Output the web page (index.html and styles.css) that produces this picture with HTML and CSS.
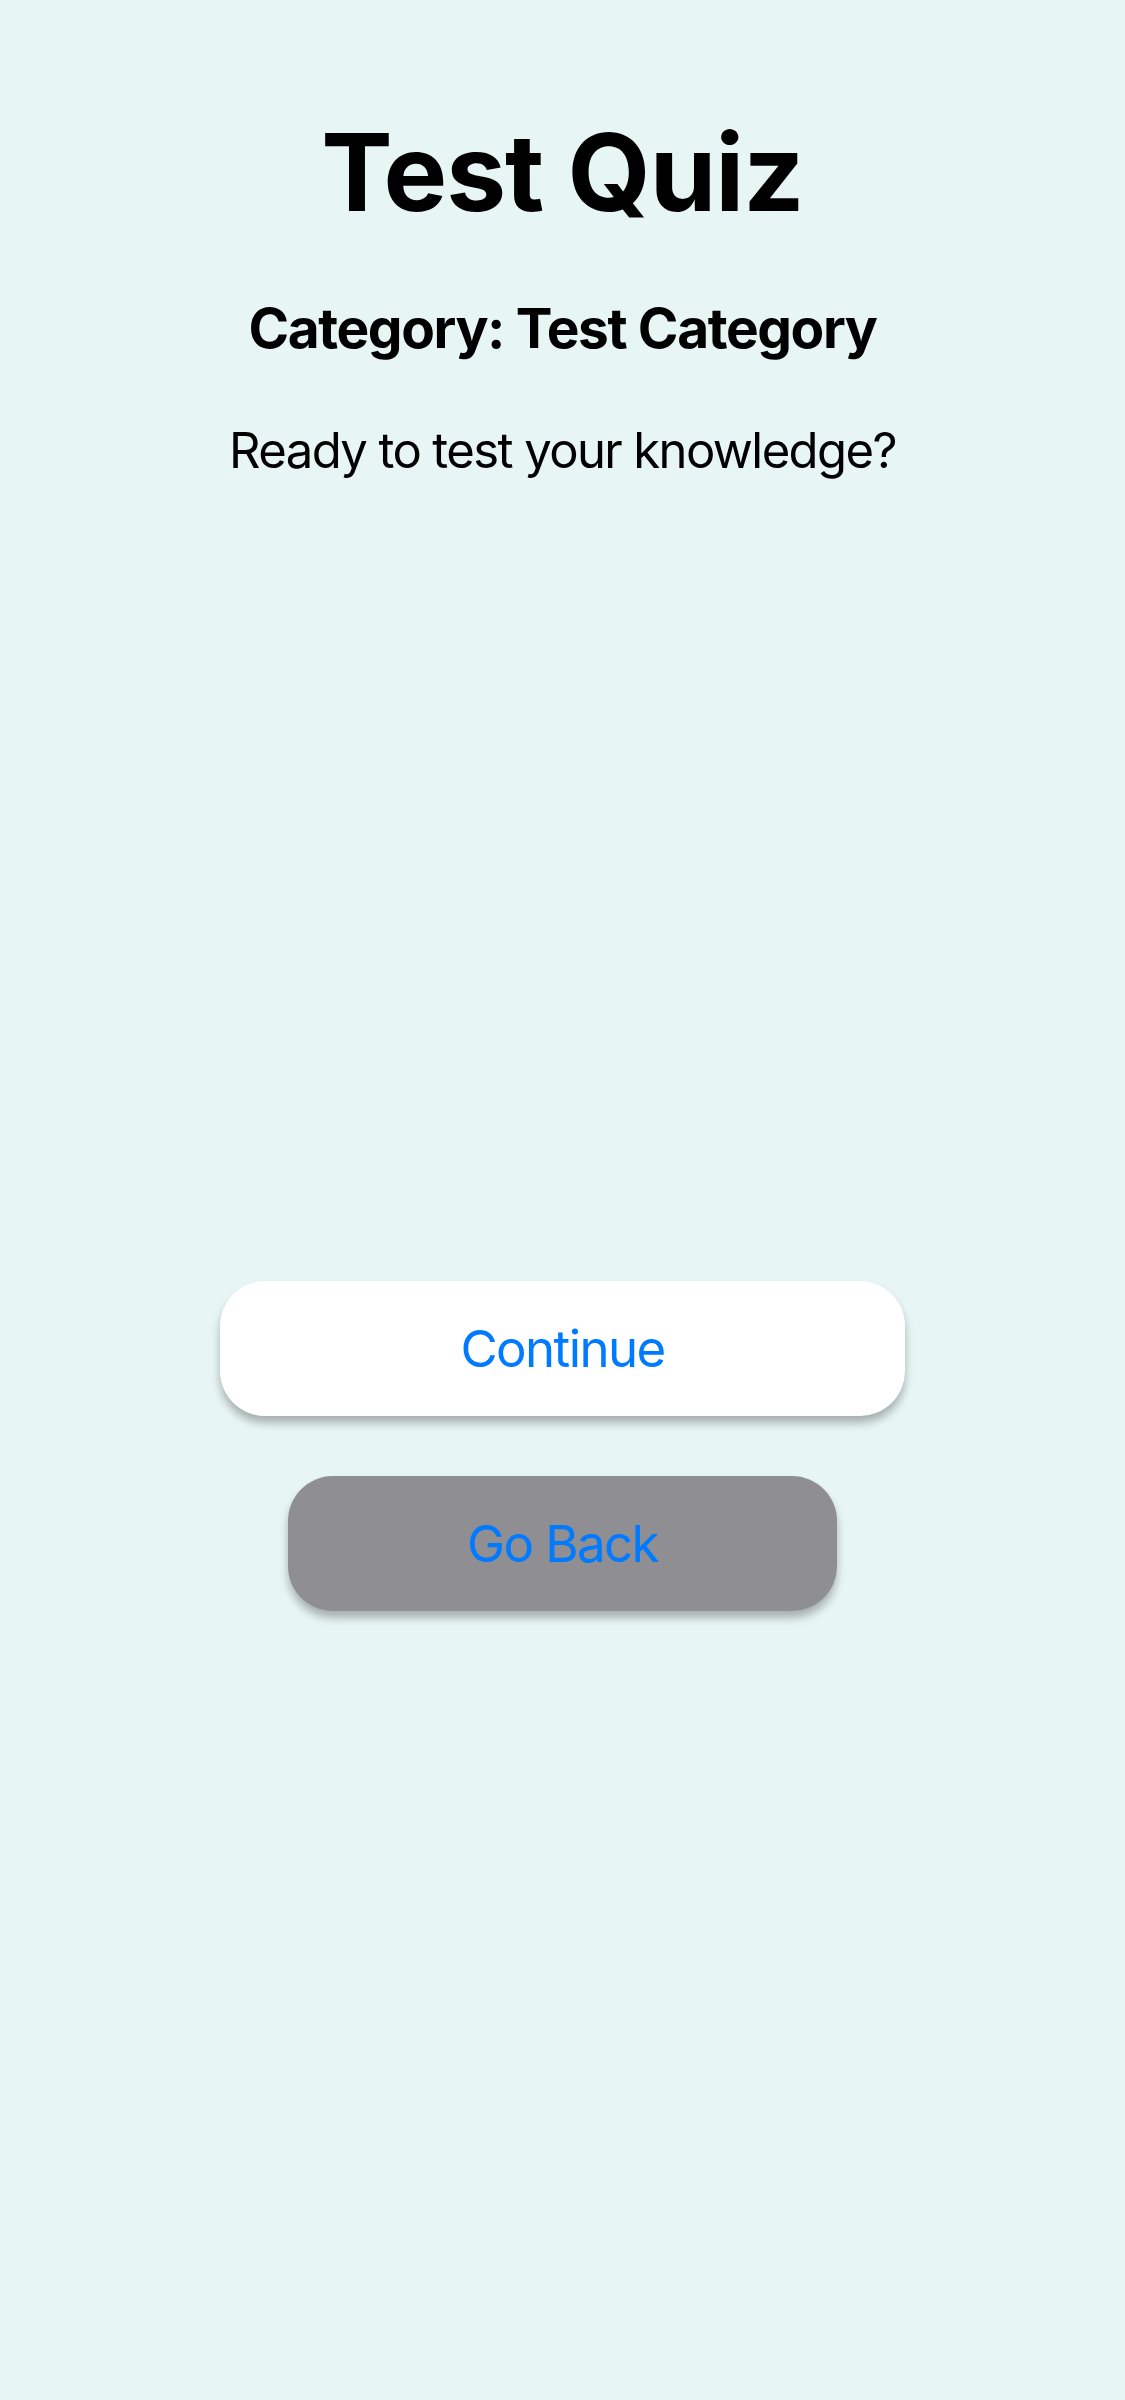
FILE: index.html
```html
<!DOCTYPE html>
<html lang="en">
<head>
<meta charset="utf-8">
<title>Test Quiz</title>
<link rel="stylesheet" href="styles.css">
</head>
<body>
<main class="screen">
  <h1 class="title">Test Quiz</h1>
  <h2 class="category">Category: Test Category</h2>
  <p class="prompt">Ready to test your knowledge?</p>
  <div class="actions">
    <button class="btn btn-continue" type="button">Continue</button>
    <button class="btn btn-back" type="button">Go Back</button>
  </div>
</main>
</body>
</html>
```
FILE: styles.css
```css
html, body {
  margin: 0;
  padding: 0;
}
body {
  background: #e8f5f5;
  font-family: Inter, "Noto Sans", "Liberation Sans", sans-serif;
  color: #000;
}
.screen {
  min-height: 2400px;
  display: flex;
  flex-direction: column;
  align-items: center;
}
.title {
  margin: 119px 0 0;
  font-size: 107px;
  line-height: 1;
  font-weight: 700;
  letter-spacing: -1px;
}
.category {
  margin: 75px 0 0;
  font-size: 55px;
  line-height: 1;
  font-weight: 700;
  letter-spacing: -1.4px;
}
.prompt {
  margin: 70px 0 0;
  font-size: 49px;
  line-height: 1;
  font-weight: 400;
  letter-spacing: -1.6px;
}
.actions {
  margin-top: 806px;
  display: flex;
  flex-direction: column;
  align-items: center;
  gap: 60px;
}
.btn {
  height: 135px;
  border: none;
  border-radius: 45px;
  font-family: inherit;
  font-size: 51px;
  font-weight: 400;
  letter-spacing: -1.6px;
  color: #007aff;
  box-shadow: 0 7px 9px rgba(0, 0, 0, 0.28);
  padding: 0;
}
.btn-continue {
  width: 685px;
  background: #ffffff;
}
.btn-back {
  width: 549px;
  background: #8e8e93;
}
```
